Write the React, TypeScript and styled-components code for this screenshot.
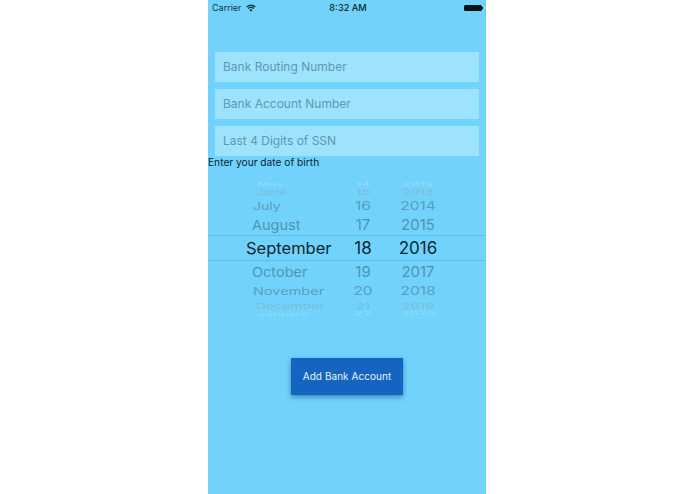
import React from "react";
import styled, { createGlobalStyle } from "styled-components";

const Global = createGlobalStyle`
  html, body { margin: 0; padding: 0; background: #fff; }
  body { font-family: Inter, "Liberation Sans", sans-serif; }
`;
const Page = styled.div`
  display: flex;
  justify-content: center;
  height: 494px;
  padding-right: 1px;
  overflow: hidden;
`;
const Phone = styled.div`
  width: 278px;
  height: 494px;
  background: #71d3fb;
  display: flex;
  flex-direction: column;
`;
const StatusBar = styled.div`
  height: 15px;
  padding: 0 4px;
  display: grid;
  grid-template-columns: 1fr auto 1fr;
  align-items: center;
  font-size: 9px;
  color: #12303f;
`;
const Left = styled.div`
  display: flex;
  align-items: center;
  gap: 4px;
`;
const Time = styled.div`
  font-weight: 500;
  font-size: 9.2px;
  color: #0c2530;
  padding-left: 2px;
`;
const Battery = styled.div`
  justify-self: end;
  width: 18px;
  height: 6px;
  background: #0a1216;
  border-radius: 1.5px;
  position: relative;
  &::after {
    content: "";
    position: absolute;
    right: -1px;
    top: 2px;
    width: 1px;
    height: 2px;
    background: #0a1216;
  }
`;
const Form = styled.div`
  margin-top: 37px;
  padding: 0 7.5px 0 7px;
  display: flex;
  flex-direction: column;
  gap: 7.5px;
`;
const Field = styled.div`
  height: 29.5px;
  box-sizing: border-box;
  background: #9de3fe;
  display: flex;
  align-items: center;
  padding: 0 0 1px 8px;
  font-size: 12px;
  color: #5f97af;
`;
const Label = styled.div`
  font-size: 10.2px;
  line-height: 13px;
  color: #08242f;
  white-space: nowrap;
`;
const Wheel = styled.div`
  margin-top: 11px;
  display: flex;
  flex-direction: column;
`;
const Row = styled.div<{ $h: number; $selected?: boolean }>`
  height: ${(p) => p.$h}px;
  display: flex;
  align-items: center;
  overflow: hidden;
  box-sizing: border-box;
  ${(p) =>
    p.$selected
      ? "border-top: 1px solid #5fbde4; border-bottom: 1px solid #5fbde4;"
      : ""}
`;
const MonthCell = styled.div`
  width: 130px;
  flex: none;
  white-space: nowrap;
`;
const DayCell = styled.div`
  width: 50px;
  flex: none;
  text-align: center;
`;
const YearCell = styled.div`
  width: 50px;
  margin-left: 5px;
  flex: none;
  text-align: center;
`;
const Txt = styled.span<{ $size: number; $sy: number; $color: string; $indent?: number }>`
  display: inline-block;
  font-size: ${(p) => p.$size}px;
  line-height: 1;
  color: ${(p) => p.$color};
  transform: scaleY(${(p) => p.$sy});
  margin-left: ${(p) => p.$indent ?? 0}px;
  font-family: "Inter", sans-serif;
`;
const ButtonWrap = styled.div`
  margin-top: 42px;
  display: flex;
  justify-content: center;
`;
const Button = styled.button`
  width: 112px;
  height: 37px;
  border: 0;
  padding: 0;
  background: #1565c0;
  color: #e6f1fb;
  font: 400 10px Inter, sans-serif;
  letter-spacing: 0.05px;
  box-shadow: 0 2px 5px rgba(10, 70, 120, 0.55);
`;

const rows = [
  { h: 6, ms: 13, ns: 14, sy: 0.35, color: "#9adcf6", m: "May", d: "14", y: "2012", i: 49 },
  { h: 11, ms: 13.5, ns: 14, sy: 0.55, color: "#7cbcd8", m: "June", d: "15", y: "2013", i: 48 },
  { h: 17, ms: 14, ns: 15.5, sy: 0.75, color: "#5a9fbd", m: "July", d: "16", y: "2014", i: 45 },
  { h: 21, ms: 14.5, ns: 15, sy: 0.95, color: "#4f94b1", m: "August", d: "17", y: "2015", i: 44 },
  { h: 26, ms: 16.5, ns: 17, sy: 1, color: "#0b2733", m: "September", d: "18", y: "2016", i: 38, sel: true },
  { h: 21, ms: 14.5, ns: 15, sy: 0.95, color: "#4f94b1", m: "October", d: "19", y: "2017", i: 44 },
  { h: 17, ms: 14.5, ns: 15.5, sy: 0.75, color: "#5a9fbd", m: "November", d: "20", y: "2018", i: 45 },
  { h: 12, ms: 14, ns: 14.5, sy: 0.55, color: "#7cbcd8", m: "December", d: "21", y: "2019", i: 48 },
  { h: 5, ms: 13, ns: 14, sy: 0.3, color: "#9adcf6", m: "January", d: "22", y: "2020", i: 50 },
];

export default function App() {
  return (
    <>
      <Global />
      <Page>
        <Phone>
          <StatusBar>
            <Left>
              Carrier
              <svg width="10" height="8" viewBox="0 0 20 15" fill="#12303f">
                <path d="M10 15 L6.8 11.4 A4.6 4.6 0 0 1 13.2 11.4 Z" />
                <path d="M5.2 9.6 L3.6 7.8 A9.2 9.2 0 0 1 16.4 7.8 L14.8 9.6 A7 7 0 0 0 5.2 9.6 Z" />
                <path d="M2.4 6.4 L0.6 4.4 A13.6 13.6 0 0 1 19.4 4.4 L17.6 6.4 A11 11 0 0 0 2.4 6.4 Z" />
              </svg>
            </Left>
            <Time>8:32 AM</Time>
            <Battery />
          </StatusBar>
          <Form>
            <Field>Bank Routing Number</Field>
            <Field>Bank Account Number</Field>
            <Field>Last 4 Digits of SSN</Field>
          </Form>
          <Label>Enter your date of birth</Label>
          <Wheel>
            {rows.map((r) => (
              <Row key={r.m} $h={r.h} $selected={r.sel}>
                <MonthCell>
                  <Txt $size={r.ms} $sy={r.sy} $color={r.color} $indent={r.i}>{r.m}</Txt>
                </MonthCell>
                <DayCell>
                  <Txt $size={r.ns} $sy={r.sy} $color={r.color}>{r.d}</Txt>
                </DayCell>
                <YearCell>
                  <Txt $size={r.ns} $sy={r.sy} $color={r.color}>{r.y}</Txt>
                </YearCell>
              </Row>
            ))}
          </Wheel>
          <ButtonWrap>
            <Button>Add Bank Account</Button>
          </ButtonWrap>
        </Phone>
      </Page>
    </>
  );
}
